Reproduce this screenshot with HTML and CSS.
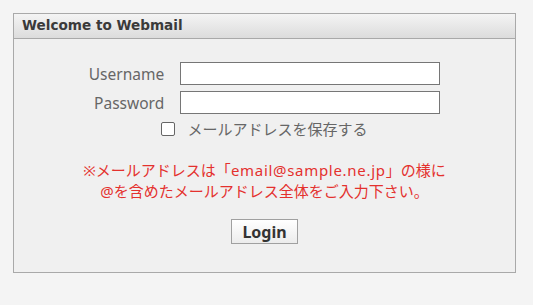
FILE: index.html
```html
<!DOCTYPE html>
<html lang="ja">
<head>
<meta charset="utf-8">
<title>Webmail</title>
<link rel="stylesheet" href="styles.css">
</head>
<body>
<div class="panel">
  <div class="panel-head">Welcome to Webmail</div>
  <form class="panel-body">
    <div class="fields">
      <label class="lbl" for="u">Username</label>
      <input class="inp" id="u" type="text">
      <label class="lbl" for="p">Password</label>
      <input class="inp" id="p" type="password">
    </div>
    <label class="remember"><span class="box"></span><span>メールアドレスを保存する</span></label>
    <p class="note">※メールアドレスは「<span class="addr">email@sample.ne.jp</span>」の様に<br>@を含めたメールアドレス全体をご入力下さい。</p>
    <div class="actions"><button class="btn" type="button">Login</button></div>
  </form>
</div>
</body>
</html>
```
FILE: styles.css
```css
html, body {
  margin: 0;
  padding: 0;
  background: #f4f4f4;
}
body {
  padding: 13px;
  font-family: "Noto Sans", "Noto Sans CJK JP", sans-serif;
}
.panel {
  width: 501px;
  height: 258px;
  border: 1px solid #a9a9a9;
  background: #f0f0f0;
}
.panel-head {
  height: 25px;
  box-sizing: border-box;
  border-bottom: 1px solid #a9a9a9;
  background: linear-gradient(#f4f4f4, #dcdcdc);
  padding-left: 8px;
  font-family: "DejaVu Sans", sans-serif;
  font-size: 13.6px;
  font-weight: bold;
  line-height: 23px;
  color: #3a3a3a;
}
.panel-body {
  display: flex;
  flex-direction: column;
  align-items: center;
  padding-top: 23px;
  margin: 0;
}
.fields {
  display: grid;
  grid-template-columns: auto 260px;
  column-gap: 16px;
  row-gap: 6px;
  align-items: center;
}
.lbl {
  text-align: right;
  font-size: 15.5px;
  color: #666;
}
.inp {
  box-sizing: border-box;
  width: 260px;
  height: 23px;
  margin: 0;
  border: 1px solid #767676;
  background: #fff;
}
.remember {
  display: flex;
  align-items: center;
  gap: 12px;
  margin-top: 5px;
  font-size: 15px;
  color: #666;
  line-height: 20px;
}
.box {
  width: 12px;
  height: 12px;
  border: 1px solid #666;
  border-radius: 2px;
  background: #fff;
}
.note {
  margin: 21px 0 0;
  text-align: center;
  color: #e4312e;
  font-size: 15px;
  line-height: 21px;
}
.addr {
  letter-spacing: 0.7px;
}
.actions {
  display: flex;
  margin-top: 17px;
}
.btn {
  box-sizing: border-box;
  height: 25px;
  width: 67px;
  padding: 0;
  border: 1px solid #a0a0a0;
  background: linear-gradient(#ffffff, #ececec);
  font-family: "Noto Sans", sans-serif;
  font-weight: bold;
  font-size: 16px;
  color: #333;
  line-height: 22px;
}
```
